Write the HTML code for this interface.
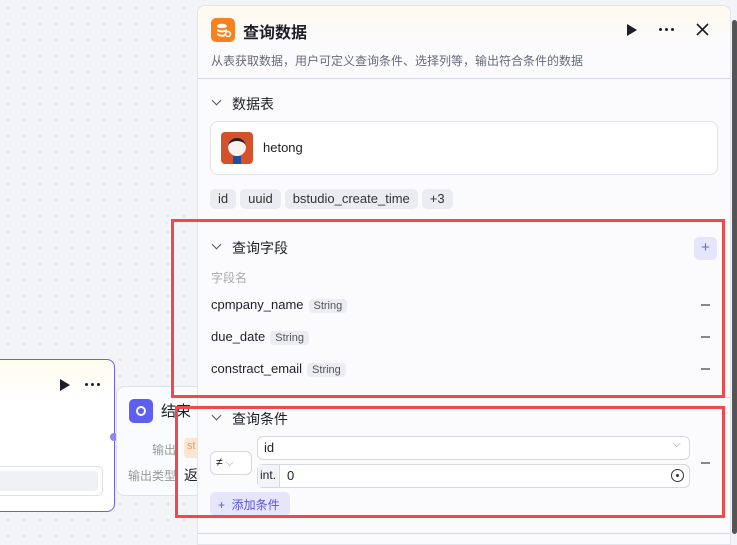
<!DOCTYPE html>
<html><head><meta charset="utf-8"><style>
*{box-sizing:border-box;margin:0;padding:0}
body{width:737px;height:534px;overflow:hidden;position:relative;background:#f3f4f7;background-image:radial-gradient(#dfe1e6 1px,transparent 1.2px);background-size:16px 16px;font-family:"Liberation Sans","Noto Sans CJK SC",sans-serif;color:#1d1f27}
.abs{position:absolute}
.node{left:-10px;top:359px;width:125px;height:153px;border:1px solid #6a5ff2;border-radius:8px;background:linear-gradient(#fffbee,#fff 40px)}
.end{left:116px;top:386px;width:100px;height:110px;border:1px solid #dfe1ea;border-radius:8px;background:#fafbfe}
.panel{left:197px;top:5px;width:534px;height:540px;background:#fbfbfe;border:1px solid #e4e5ec;border-radius:8px 8px 0 0;overflow:hidden}
.hdr{height:73px;background:linear-gradient(#fffaee,#fbfbfe 40px);border-bottom:1px solid #d6d8e2}
.sec{font-size:14px;color:#1d1f27}
.chev{display:inline-block;width:7px;height:7px;border-right:1.5px solid #555;border-bottom:1.5px solid #555;transform:rotate(45deg)}
.tag{display:inline-block;height:20px;line-height:20px;padding:0 8px;background:#ebecf1;border-radius:5px;font-size:13px;color:#333;margin-right:4px}
.st{display:inline-block;font-size:11px;background:#ecedf3;border-radius:4px;padding:1px 5px;color:#555;margin-left:5px}
.minus{width:9px;height:2px;background:#888}
.red{border:3px solid #f2484a}
.dots{display:flex;gap:3px}.dots i{width:3px;height:3px;border-radius:50%;background:#1d1f27}
</style></head><body>
<div class="abs node">
 <svg class="abs" style="left:67px;top:18px" width="13" height="14"><path d="M2 1L12 7L2 13Z" fill="#1d1f27"/></svg>
 <div class="abs dots" style="left:94px;top:23px"><i></i><i></i><i></i></div>
 <div class="abs" style="left:-2px;top:106px;width:114px;height:30px;border:1px solid #dfe1ea;border-radius:5px;background:#fff"><div style="margin:4px;height:20px;background:#eff0f4;border-radius:4px"></div></div>
</div>
<div class="abs" style="left:110px;top:433px;width:8px;height:8px;border-radius:50%;background:#8d86f5"></div>
<div class="abs end">
 <div class="abs" style="left:12px;top:12px;width:24px;height:24px;border-radius:5px;background:#5c5ff0"><div style="margin:7px 0 0 7px;width:10px;height:10px;border:2px solid #fff;border-radius:50%"></div></div>
 <div class="abs" style="left:44px;top:13px;font-size:15px">结束</div>
 <div class="abs" style="left:35px;top:54px;font-size:12px;color:#999">输出</div>
 <div class="abs" style="left:67px;top:51px;width:20px;height:20px;background:#fbe6d2;border-radius:4px;font-size:11px;color:#e8a26a;padding:2px 3px">st</div>
 <div class="abs" style="left:11px;top:80px;font-size:12px;color:#999">输出类型</div>
 <div class="abs" style="left:67px;top:78px;font-size:14px">返</div>
</div>
<div class="abs panel">
 <div class="hdr">
  <div class="abs" style="left:13px;top:12px;width:24px;height:24px;border-radius:5px;background:#f5821f"><svg width="24" height="24"><ellipse cx="11" cy="8" rx="5" ry="2.2" fill="#fff"/><path d="M6 11q5 3 10 0v2q-5 3-10 0z M6 15q5 3 8 1v2q-3 2-8-1z" fill="#fff"/><circle cx="17" cy="16" r="2.5" fill="none" stroke="#fff" stroke-width="1.5"/></svg></div>
  <div class="abs" style="left:45px;top:13px;font-size:16px;font-weight:bold">查询数据</div>
  <svg class="abs" style="left:428px;top:17px" width="12" height="14"><path d="M1 1L11 7L1 13Z" fill="#1d1f27"/></svg>
  <div class="abs dots" style="left:461px;top:22px"><i></i><i></i><i></i></div>
  <svg class="abs" style="left:498px;top:17px" width="13" height="13"><path d="M1 1L12 12M12 1L1 12" stroke="#1d1f27" stroke-width="1.6"/></svg>
  <div class="abs" style="left:13px;top:46px;font-size:12px;color:#676b78">从表获取数据，用户可定义查询条件、选择列等，输出符合条件的数据</div>
 </div>
 <span class="abs chev" style="left:15px;top:91px"></span>
 <div class="abs sec" style="left:34px;top:88px">数据表</div>
 <div class="abs" style="left:12px;top:115px;width:508px;height:54px;border:1px solid #e2e3ea;border-radius:8px;background:#fff">
  <div class="abs" style="left:10px;top:10px;width:32px;height:32px;border-radius:4px;background:#d4512c;overflow:hidden"><div style="margin:6px auto 0;width:18px;height:18px;border-radius:50%;background:#fdf1ee;border-top:3px solid #222"></div><div style="margin:0 auto;width:8px;height:8px;background:#1d4fa0"></div></div>
  <div class="abs" style="left:52px;top:18px;font-size:13px">hetong</div>
 </div>
 <div class="abs" style="left:12px;top:183px"><span class="tag">id</span><span class="tag">uuid</span><span class="tag">bstudio_create_time</span><span class="tag">+3</span></div>
 <div class="abs" style="left:0;top:391px;width:534px;border-top:1px solid #d6d8e2"></div>
 <span class="abs chev" style="left:15px;top:235px"></span>
 <div class="abs sec" style="left:34px;top:232px">查询字段</div>
 <div class="abs" style="left:496px;top:231px;width:23px;height:23px;background:#e5e5fc;border-radius:5px;color:#6a63f0;text-align:center;line-height:22px;font-size:15px">+</div>
 <div class="abs" style="left:13px;top:263px;font-size:12px;color:#aaa">字段名</div>
 <div class="abs" style="left:13px;top:291px;font-size:13px">cpmpany_name<span class="st">String</span></div>
 <div class="abs" style="left:13px;top:323px;font-size:13px">due_date<span class="st">String</span></div>
 <div class="abs" style="left:13px;top:355px;font-size:13px">constract_email<span class="st">String</span></div>
 <div class="abs minus" style="left:503px;top:298px"></div>
 <div class="abs minus" style="left:503px;top:330px"></div>
 <div class="abs minus" style="left:503px;top:362px"></div>
 <span class="abs chev" style="left:15px;top:406px"></span>
 <div class="abs sec" style="left:34px;top:403px">查询条件</div>
 <div class="abs" style="left:12px;top:445px;width:42px;height:24px;border:1px solid #d6d8e2;border-radius:6px;background:#fff;font-size:12px;padding:3px 5px">≠ <span style="color:#999;font-size:10px">⌵</span></div>
 <div class="abs" style="left:59px;top:430px;width:433px;height:24px;border:1px solid #d6d8e2;border-radius:6px;background:#fff;font-size:13px;padding:3px 6px">id<span class="abs" style="right:8px;top:1px;color:#999;font-size:11px">⌵</span></div>
 <div class="abs" style="left:59px;top:458px;width:433px;height:24px;border:1px solid #d6d8e2;border-radius:6px;background:#fff;font-size:13px"><span class="abs" style="left:0;top:0;width:22px;height:22px;border-right:1px solid #d6d8e2;background:#f3f4f7;font-size:12px;padding:3px 2px">int.</span><span class="abs" style="left:29px;top:3px">0</span><span class="abs" style="right:5px;top:4px;width:13px;height:13px;border:1.5px solid #333;border-radius:50%"><span style="display:block;margin:3.5px;width:3px;height:3px;background:#333;border-radius:50%"></span></span></div>
 <div class="abs minus" style="left:503px;top:456px"></div>
 <div class="abs" style="left:12px;top:486px;width:80px;height:24px;background:#e5e5fc;border-radius:5px;color:#5b54e8;font-size:12px;padding:4px 8px">+&nbsp; 添加条件</div>
 <div class="abs" style="left:0;top:527px;width:534px;border-top:1px solid #d6d8e2"></div>
</div>
<div class="abs" style="left:732px;top:20px;width:5px;height:514px;background:#555;border-radius:3px"></div>
<div class="abs red" style="left:171px;top:219px;width:554px;height:179px"></div>
<div class="abs red" style="left:175px;top:406px;width:550px;height:112px"></div>
</body></html>
